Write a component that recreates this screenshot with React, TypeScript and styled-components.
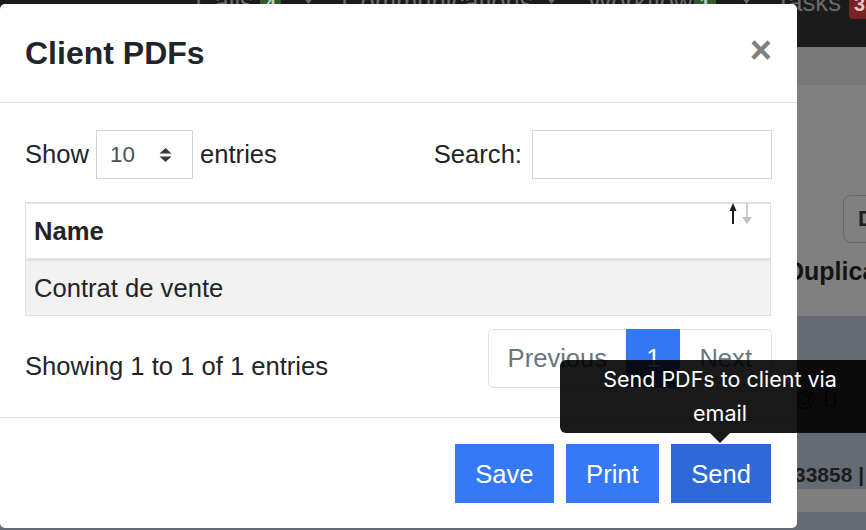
import React from "react";
import styled, { createGlobalStyle } from "styled-components";

const GlobalStyle = createGlobalStyle`
  html, body { margin: 0; padding: 0; }
  body {
    width: 866px;
    height: 530px;
    overflow: hidden;
    background: #1b1b1b;
    font-family: "Liberation Sans", Arial, Helvetica, sans-serif;
  }
  *, *::before, *::after { box-sizing: border-box; }
`;

const Screen = styled.div`
  position: relative;
  width: 866px;
  height: 530px;
  overflow: hidden;
`;

/* ---------- dimmed page behind the modal ---------- */
const Page = styled.div`
  display: flex;
  flex-direction: column;
  width: 866px;
  height: 530px;
`;

const NavBar = styled.nav`
  flex: none;
  height: 47px;
  background: #1b1b1b;
  display: flex;
  align-items: flex-start;
  padding-left: 196px;
  overflow: hidden;
  white-space: nowrap;
`;

const NavLink = styled.span<{ $ml: number }>`
  flex: none;
  margin-left: ${(p) => p.$ml}px;
  margin-top: -12px;
  font-size: 25.6px;
  line-height: 29px;
  color: #6b6b6b;
`;

const NavBadge = styled.span<{ $tone: "green" | "red"; $ml: number }>`
  flex: none;
  margin-left: ${(p) => p.$ml}px;
  margin-top: -10px;
  padding: 0 5px;
  height: 29px;
  border-radius: 4px;
  font-size: 20px;
  font-weight: 700;
  line-height: 29px;
  color: ${(p) => (p.$tone === "red" ? "#e4c6c6" : "#bcd0bc")};
  background: ${(p) => (p.$tone === "red" ? "#7a2222" : "#2c5a2c")};
`;

const NavCaret = styled.svg<{ $ml: number }>`
  flex: none;
  margin-left: ${(p) => p.$ml}px;
  margin-top: -3px;
`;

const SubBar = styled.div`
  flex: none;
  height: 38px;
  background: #787878;
`;

const GraySection = styled.section`
  flex: none;
  height: 231px;
  background: #808080;
  display: flex;
  flex-direction: column;
  align-items: flex-start;
  padding-top: 110px;
`;

const OutlineButton = styled.div`
  margin-left: 843px;
  width: 60px;
  height: 48px;
  border: 1.5px solid #696969;
  border-radius: 8px;
  padding-left: 14px;
  font-size: 22px;
  font-weight: 700;
  line-height: 45px;
  color: #1e1e1e;
`;

const PageHeading = styled.div`
  margin-top: 14px;
  margin-left: 786px;
  font-size: 25px;
  font-weight: 700;
  line-height: 28px;
  color: #141414;
  white-space: nowrap;
`;

const SlateSection = styled.section<{ $h: number }>`
  flex: none;
  height: ${(p) => p.$h}px;
  background: #646b75;
  display: flex;
  flex-direction: column;
  align-items: flex-start;
`;

const IconRow = styled.div`
  margin-top: 69px;
  margin-left: 795px;
  display: flex;
  align-items: center;
  gap: 9px;
  height: 28px;
  font-size: 22px;
  font-weight: 700;
  color: #222;
`;

const RefNumber = styled.div`
  margin-top: 49px;
  margin-left: 794px;
  font-size: 21px;
  font-weight: 700;
  line-height: 28px;
  color: #1c1c1c;
  white-space: nowrap;
`;

const Band = styled.div`
  flex: none;
  height: 23px;
  background: #7f7f7f;
`;

/* ---------- modal ---------- */
const Modal = styled.div`
  position: absolute;
  left: 0;
  top: 4px;
  z-index: 1;
  width: 797px;
  height: 524px;
  background: #fff;
  border-radius: 5px;
  display: flex;
  flex-direction: column;
  color: #212529;
`;

const Header = styled.header`
  display: flex;
  align-items: flex-start;
  justify-content: space-between;
  padding: 25px;
  border-bottom: 1px solid #dee2e6;
`;

const Title = styled.h5`
  margin: 0;
  font-size: 32px;
  font-weight: 700;
  line-height: 48px;
  color: #212529;
`;

const CloseButton = styled.button`
  margin: -3px 0 0 0;
  padding: 0;
  border: 0;
  background: transparent;
  font-family: "Liberation Sans", Arial, sans-serif;
  font-size: 38px;
  font-weight: 700;
  line-height: 48px;
  color: #808080;
`;

const Body = styled.div`
  flex: 1;
  padding: 27px 25px 0;
  display: flex;
  flex-direction: column;
`;

const Controls = styled.div`
  display: flex;
  align-items: center;
  justify-content: space-between;
  height: 49px;
  font-size: 25.6px;
`;

const Label = styled.label`
  display: flex;
  align-items: center;
  gap: 7px;
  white-space: nowrap;
`;

const SelectBox = styled.div`
  width: 97px;
  height: 49px;
  border: 1px solid #ced4da;
  display: flex;
  align-items: center;
  justify-content: space-between;
  padding: 0 20px 0 13px;
  font-size: 22.4px;
  color: #495057;
`;

const SearchInput = styled.input`
  margin-left: 3px;
  width: 240px;
  height: 49px;
  border: 1px solid #ced4da;
  border-radius: 0;
  outline: none;
  font-size: 22.4px;
  padding: 0 12px;
`;

const Table = styled.table`
  margin-top: 23px;
  width: 746px;
  border-collapse: separate;
  border-spacing: 0;
  border: 1px solid #dee2e6;
  border-top: 2px solid #dee2e6;
  font-size: 25.6px;
`;

const HeadCell = styled.th`
  position: relative;
  padding: 8px 8px;
  border-bottom: 3px solid #dee2e6;
  text-align: left;
  font-weight: 700;
  line-height: 38px;
`;

const SortIcon = styled.svg`
  position: absolute;
  right: 16px;
  top: -2px;
`;

const Cell = styled.td`
  padding: 8px 8px;
  line-height: 38px;
  background: #f2f2f2;
`;

const InfoRow = styled.div`
  margin-top: 13px;
  display: flex;
  align-items: flex-start;
  justify-content: space-between;
`;

const Info = styled.div`
  padding-top: 18px;
  font-size: 25.6px;
  line-height: 38px;
`;

const Pagination = styled.ul`
  margin: 0;
  padding: 0;
  list-style: none;
  display: flex;
`;

const PageLink = styled.li<{ $active?: boolean; $first?: boolean; $last?: boolean }>`
  margin-left: ${(p) => (p.$first ? 0 : -1)}px;
  padding: 12px 19px;
  border: 1px solid ${(p) => (p.$active ? "#3478f6" : "#dee2e6")};
  border-radius: ${(p) => (p.$first ? "5px 0 0 5px" : p.$last ? "0 5px 5px 0" : "0")};
  background: ${(p) => (p.$active ? "#3478f6" : "#fff")};
  color: ${(p) => (p.$active ? "#fff" : "#6c757d")};
  font-size: 25.6px;
  line-height: 33px;
  position: relative;
  z-index: ${(p) => (p.$active ? 1 : 0)};
`;

const Footer = styled.footer`
  display: flex;
  justify-content: flex-end;
  gap: 12.5px;
  padding: 26px 26px 25px;
  border-top: 1px solid #dee2e6;
`;

const ActionButton = styled.button<{ $hover?: boolean }>`
  height: 59px;
  padding: 0 20px;
  border: 0;
  border-radius: 0;
  background: ${(p) => (p.$hover ? "#2e69d6" : "#3679f6")};
  color: #fff;
  font-family: "Liberation Sans", Arial, sans-serif;
  font-size: 25.6px;
  line-height: 38px;
`;

/* ---------- tooltip ---------- */
const Tooltip = styled.div`
  position: absolute;
  left: 560px;
  top: 360px;
  z-index: 10;
  width: 320px;
  padding: 3px 30px;
  border-radius: 6px;
  background: rgba(0, 0, 0, 0.9);
  color: #fff;
  text-align: center;
  font-family: Inter, "Noto Sans", sans-serif;
  font-size: 21.5px;
  line-height: 33.6px;
`;

const TooltipArrow = styled.span`
  position: absolute;
  left: 150px;
  bottom: -10px;
  width: 0;
  height: 0;
  border-left: 10px solid transparent;
  border-right: 10px solid transparent;
  border-top: 10px solid rgba(0, 0, 0, 0.9);
`;

const Caret = ({ ml }: { ml: number }) => (
  <NavCaret $ml={ml} width="11" height="7" viewBox="0 0 11 7">
    <polygon points="0,0 11,0 5.5,7" fill="#6b6b6b" />
  </NavCaret>
);

export default function App() {
  return (
    <Screen>
      <GlobalStyle />
      <Page>
        <NavBar>
          <NavLink $ml={0}>Calls</NavLink>
          <NavBadge $tone="green" $ml={7}>4</NavBadge>
          <Caret ml={22} />
          <NavLink $ml={28}>Communications</NavLink>
          <Caret ml={13} />
          <NavLink $ml={31}>Workflow</NavLink>
          <NavBadge $tone="green" $ml={2}>1</NavBadge>
          <Caret ml={25} />
          <NavLink $ml={24}>Tasks</NavLink>
          <NavBadge $tone="red" $ml={8}>3</NavBadge>
        </NavBar>
        <SubBar />
        <GraySection>
          <OutlineButton>D</OutlineButton>
          <PageHeading>Duplicate</PageHeading>
        </GraySection>
        <SlateSection $h={173}>
          <IconRow>
            <span>@</span>
            <svg width="11" height="16" viewBox="0 0 11 16">
              <rect x="1" y="1" width="9" height="14" rx="2" fill="none" stroke="#222" strokeWidth="1.6" />
            </svg>
          </IconRow>
          <RefNumber>33858 | </RefNumber>
        </SlateSection>
        <Band />
        <SlateSection $h={18} />
      </Page>

      <Modal>
        <Header>
          <Title>Client PDFs</Title>
          <CloseButton aria-label="Close">×</CloseButton>
        </Header>
        <Body>
          <Controls>
            <Label>
              Show
              <SelectBox>
                <span>10</span>
                <svg width="13" height="14" viewBox="0 0 13 14">
                  <polygon points="0.5,5.5 6.5,0 12.5,5.5" fill="#343a40" />
                  <polygon points="0.5,8.5 6.5,14 12.5,8.5" fill="#343a40" />
                </svg>
              </SelectBox>
              entries
            </Label>
            <Label>
              Search:
              <SearchInput type="search" />
            </Label>
          </Controls>
          <Table>
            <thead>
              <tr>
                <HeadCell>
                  Name
                  <SortIcon width="26" height="24" viewBox="0 0 26 24">
                    <line x1="5" y1="4" x2="5" y2="22" stroke="#1e1e1e" strokeWidth="2" />
                    <polygon points="1.5,9 5,1 8.5,9" fill="#1e1e1e" />
                    <line x1="19" y1="1" x2="19" y2="17" stroke="#c2c2c2" strokeWidth="1.6" />
                    <polygon points="14,15 19,22 24,15" fill="#c2c2c2" />
                  </SortIcon>
                </HeadCell>
              </tr>
            </thead>
            <tbody>
              <tr>
                <Cell>Contrat de vente</Cell>
              </tr>
            </tbody>
          </Table>
          <InfoRow>
            <Info>Showing 1 to 1 of 1 entries</Info>
            <Pagination>
              <PageLink $first>Previous</PageLink>
              <PageLink $active>1</PageLink>
              <PageLink $last>Next</PageLink>
            </Pagination>
          </InfoRow>
        </Body>
        <Footer>
          <ActionButton>Save</ActionButton>
          <ActionButton>Print</ActionButton>
          <ActionButton $hover>Send</ActionButton>
        </Footer>
      </Modal>

      <Tooltip>
        Send PDFs to client via email
        <TooltipArrow />
      </Tooltip>
    </Screen>
  );
}
